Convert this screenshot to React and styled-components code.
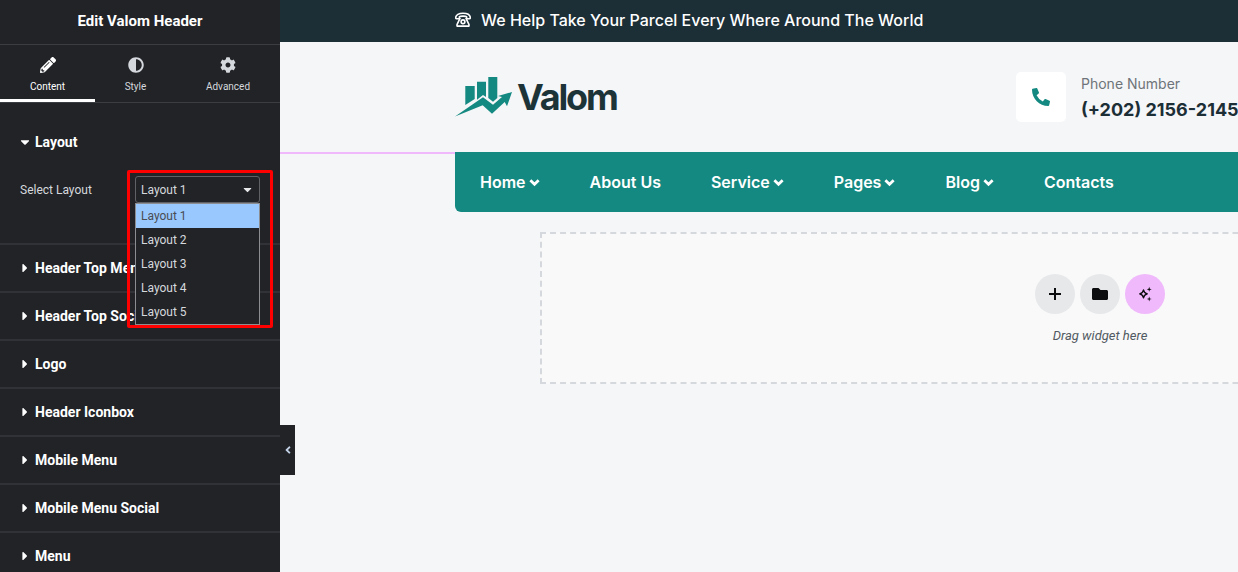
import React from "react";
import styled, { createGlobalStyle } from "styled-components";
import { FaPencilAlt, FaAdjust, FaCog, FaPhoneAlt, FaFolder, FaAngleLeft, FaCaretDown, FaCaretRight } from "react-icons/fa";

const Global = createGlobalStyle`
  html, body { margin: 0; padding: 0; width: 1238px; height: 572px; overflow: hidden; }
  * { box-sizing: border-box; }
`;
const Page = styled.div`
  position: relative; display: flex; width: 1238px; height: 572px; overflow: hidden;
  background: #f5f6f8; font-family: Inter, "Liberation Sans", sans-serif;
`;
const Panel = styled.aside`
  position: relative; flex: 0 0 280px; height: 572px; overflow: hidden; background: #212327;
  font-family: Roboto, "Liberation Sans", sans-serif; color: #fff;
`;
const PanelTitle = styled.div`
  height: 45px; display: flex; align-items: center; justify-content: center;
  padding-bottom: 3px; font-size: 15px; font-weight: 700; border-bottom: 1px solid #3a3d42;
`;
const Tabs = styled.div`
  display: grid; grid-template-columns: 95px 81px 104px; height: 58px; border-bottom: 1px solid #3a3d42;
`;
const Tab = styled.div`
  display: flex; flex-direction: column; align-items: center; padding-top: 12px; height: 57px;
  color: ${p => (p.$active ? "#fff" : "#d5d8dc")};
  border-bottom: 3px solid ${p => (p.$active ? "#fff" : "transparent")};
  svg { width: 16px; height: 16px; }
`;
const TabLabel = styled.span`font-size: 10px; line-height: 12px; margin-top: 8px;`;
const LayoutSection = styled.section`
  height: 142px; padding: 32px 20px 0; border-bottom: 2px solid #303237;
`;
const SectionHead = styled.div`
  display: flex; align-items: center; height: 14px; font-size: 14px; font-weight: 700; color: #fff;
`;
const Caret = styled.span`
  flex: none; display: inline-flex; width: 10px; margin-right: 5px; justify-content: center;
  svg { flex: none; width: 14px; height: 14px; }
`;
const SelectRow = styled.div`
  position: relative; display: flex; align-items: center; justify-content: space-between; margin-top: 27px;
`;
const SelectLabel = styled.span`font-size: 12px; color: #d5d8dc;`;
const Select = styled.div`
  display: flex; align-items: center; justify-content: space-between; width: 125px; height: 27px;
  padding: 0 5px 0 5px; border: 1px solid #5f6166; border-radius: 3px;
  font-size: 12px; color: #d5d8dc;
  svg { width: 13px; height: 13px; color: #e6e8ea; }
`;
const Options = styled.ul`
  position: absolute; left: 115px; top: 27px; width: 125px; margin: 0; padding: 0; list-style: none;
  background: #212327; border: 1px solid #8b8d90; font-size: 12px; color: #d5d8dc; z-index: 2;
`;
const Option = styled.li`
  height: 24px; line-height: 24px; padding-left: 5px;
  background: ${p => (p.$selected ? "#99c8ff" : "transparent")};
  color: ${p => (p.$selected ? "#4a4d52" : "#d5d8dc")};
`;
const Section = styled.section`
  height: 48px; padding: 16px 20px 0; border-bottom: 2px solid #303237;
`;
const Annotation = styled.div`
  position: absolute; left: 127px; top: 170px; width: 146px; height: 158px;
  border: 3px solid #ff0000; border-radius: 2px; z-index: 3; pointer-events: none;
`;
const Collapse = styled.div`
  position: absolute; left: 280px; top: 425px; width: 15px; height: 50px; background: #212327; z-index: 4;
  display: flex; align-items: center; justify-content: center; color: #c2d1e6;
  svg { width: 12px; height: 12px; }
`;
const Main = styled.main`
  flex: 1; min-width: 0; overflow: hidden; display: flex; flex-direction: column;
`;
const TopBar = styled.div`
  flex: 0 0 42px; display: flex; align-items: center; gap: 10px; padding: 0 0 2px 175px;
  background: #1c2e36; color: #fff; font-size: 16px; font-weight: 500;
  svg { width: 16px; height: 16px; }
`;
const Masthead = styled.div`
  flex: 0 0 110px; display: flex; align-items: center; padding: 0 0 0 175px;
`;
const Logo = styled.div`
  flex: 0 0 561px; display: flex; align-items: center; gap: 2px;
  svg { width: 60px; height: 44px; }
`;
const LogoText = styled.span`
  font-size: 36px; font-weight: 700; letter-spacing: -2.1px; color: #1c3338; line-height: 44px;
`;
const PhoneTile = styled.div`
  flex: 0 0 50px; height: 50px; border-radius: 5px; background: #fff; display: flex;
  align-items: center; justify-content: center; color: #148981;
  svg { width: 18px; height: 18px; }
`;
const PhoneText = styled.div`margin: 3px 0 0 15px; white-space: nowrap;`;
const PhoneLabel = styled.div`font-size: 14px; line-height: 20px; color: #6e7479;`;
const PhoneNumber = styled.div`margin-top: 3px; font-size: 18px; font-weight: 700; line-height: 26px; color: #1c2e36;`;
const NavWrap = styled.div`position: relative; flex: 0 0 60px; padding-left: 175px;`;
const PinkLine = styled.div`
  position: absolute; left: 0; top: 0; width: 175px; height: 2px; background: #f0b9fb;
`;
const Nav = styled.nav`
  width: 1000px; height: 60px; background: #148981; border-bottom-left-radius: 6px;
  display: flex; align-items: center; padding-left: 25px; gap: 50px;
  color: #fff; font-size: 16px; font-weight: 600;
`;
const NavItem = styled.span`
  display: inline-flex; align-items: center; gap: 3px;
  svg { width: 11px; height: 11px; }
`;
const DropZone = styled.div`
  width: 1120px; height: 152px; margin: 20px 0 0 260px; background: #f9f9f9;
  border: 2px dashed #d5d8dc; display: flex; flex-direction: column; align-items: center; padding-top: 40px;
`;
const Buttons = styled.div`display: flex; gap: 5px;`;
const Round = styled.div`
  width: 40px; height: 40px; border-radius: 50%; display: flex; align-items: center; justify-content: center;
  background: ${p => (p.$accent ? "#f0b9fb" : "#e6e8ea")}; color: #0c0d0e;
  svg { width: 16px; height: 16px; }
`;
const DropHint = styled.div`
  margin-top: 14px; font-family: Roboto, "Liberation Sans", sans-serif; font-style: italic;
  font-size: 13px; line-height: 16px; color: #515962;
`;

const sections = ["Header Top Menu", "Header Top Social", "Logo", "Header Iconbox", "Mobile Menu", "Mobile Menu Social", "Menu"];

const RetroPhone = () => (
  <svg viewBox="0 0 16 16" fill="none" stroke="currentColor" strokeWidth="1.6" strokeLinejoin="round">
    <path d="M.7 5.800C.7 2.800 4 1.200 8 1.200s7.300 1.600 7.300 4.600c0 .7-.3 1-.9 1h-2c-.5 0-.8-.3-.8-.8V4.600C10.500 4 5.500 4 4.400 4.600V6c0 .5-.3.8-.8.8h-2c-.6 0-.9-.3-.9-1Z" />
    <path d="M5.200 5.800 2 12.700v1.400h12v-1.400L10.800 5.800" />
    <circle cx="8" cy="9.800" r="1.900" />
  </svg>
);
const LogoMark = () => (
  <svg viewBox="0 0 60 44" fill="#148981">
    <path d="M10.300 11h9.400v13l-9.400 6Z" />
    <path d="M22 6.700h9v15.300l-3-2-6 4.700Z" />
    <path d="M33.300 2h9v21l-4.300 3.700-4.700-3.700Z" />
    <path d="M0 41.500 28 22.300 38 29.700 47 22 43 21 57 17 52 31.300 49.700 27 37 38.700 27.700 30.300Z" />
  </svg>
);
const Plus = () => (
  <svg viewBox="0 0 16 16" stroke="currentColor" strokeWidth="2"><path d="M8 2v12M2 8h12" /></svg>
);
const NavChevron = () => (
  <svg viewBox="0 0 12 12" fill="none" stroke="currentColor" strokeWidth="3"><path d="M1.500 3.500 6 8l4.500-4.500" /></svg>
);
const Sparkles = () => (
  <svg viewBox="0 0 16 16" fill="none" stroke="currentColor" strokeWidth="1.300" strokeLinejoin="round">
    <path d="M6.500 3.800c.5 2.700 1.200 3.400 3.800 4-2.600.6-3.300 1.300-3.800 4-.5-2.700-1.200-3.400-3.800-4 2.600-.6 3.300-1.300 3.800-4Z" />
    <path fill="currentColor" stroke="none" d="M12.200.8l.6 1.900 1.900.6-1.900.6-.6 1.900-.6-1.900-1.900-.6 1.900-.6ZM12.200 10.500l.6 1.900 1.900.6-1.900.6-.6 1.900-.6-1.900-1.900-.6 1.900-.6Z" />
  </svg>
);

export default function App() {
  return (
    <Page>
      <Global />
      <Panel>
        <PanelTitle>Edit Valom Header</PanelTitle>
        <Tabs>
          <Tab $active><FaPencilAlt /><TabLabel>Content</TabLabel></Tab>
          <Tab><FaAdjust /><TabLabel>Style</TabLabel></Tab>
          <Tab><FaCog /><TabLabel>Advanced</TabLabel></Tab>
        </Tabs>
        <LayoutSection>
          <SectionHead><Caret><FaCaretDown /></Caret>Layout</SectionHead>
          <SelectRow>
            <SelectLabel>Select Layout</SelectLabel>
            <Select>Layout 1<FaCaretDown /></Select>
            <Options>
              <Option $selected>Layout 1</Option>
              <Option>Layout 2</Option>
              <Option>Layout 3</Option>
              <Option>Layout 4</Option>
              <Option>Layout 5</Option>
            </Options>
          </SelectRow>
        </LayoutSection>
        {sections.map(s => (
          <Section key={s}>
            <SectionHead><Caret><FaCaretRight /></Caret>{s}</SectionHead>
          </Section>
        ))}
        <Annotation />
      </Panel>
      <Collapse><FaAngleLeft /></Collapse>
      <Main>
        <TopBar><RetroPhone />We Help Take Your Parcel Every Where Around The World</TopBar>
        <Masthead>
          <Logo><LogoMark /><LogoText>Valom</LogoText></Logo>
          <PhoneTile><FaPhoneAlt /></PhoneTile>
          <PhoneText>
            <PhoneLabel>Phone Number</PhoneLabel>
            <PhoneNumber>(+202) 2156-2145</PhoneNumber>
          </PhoneText>
        </Masthead>
        <NavWrap>
          <PinkLine />
          <Nav>
            <NavItem>Home <NavChevron /></NavItem>
            <NavItem>About Us</NavItem>
            <NavItem>Service <NavChevron /></NavItem>
            <NavItem>Pages <NavChevron /></NavItem>
            <NavItem>Blog <NavChevron /></NavItem>
            <NavItem>Contacts</NavItem>
          </Nav>
        </NavWrap>
        <DropZone>
          <Buttons>
            <Round><Plus /></Round>
            <Round><FaFolder /></Round>
            <Round $accent><Sparkles /></Round>
          </Buttons>
          <DropHint>Drag widget here</DropHint>
        </DropZone>
      </Main>
    </Page>
  );
}
